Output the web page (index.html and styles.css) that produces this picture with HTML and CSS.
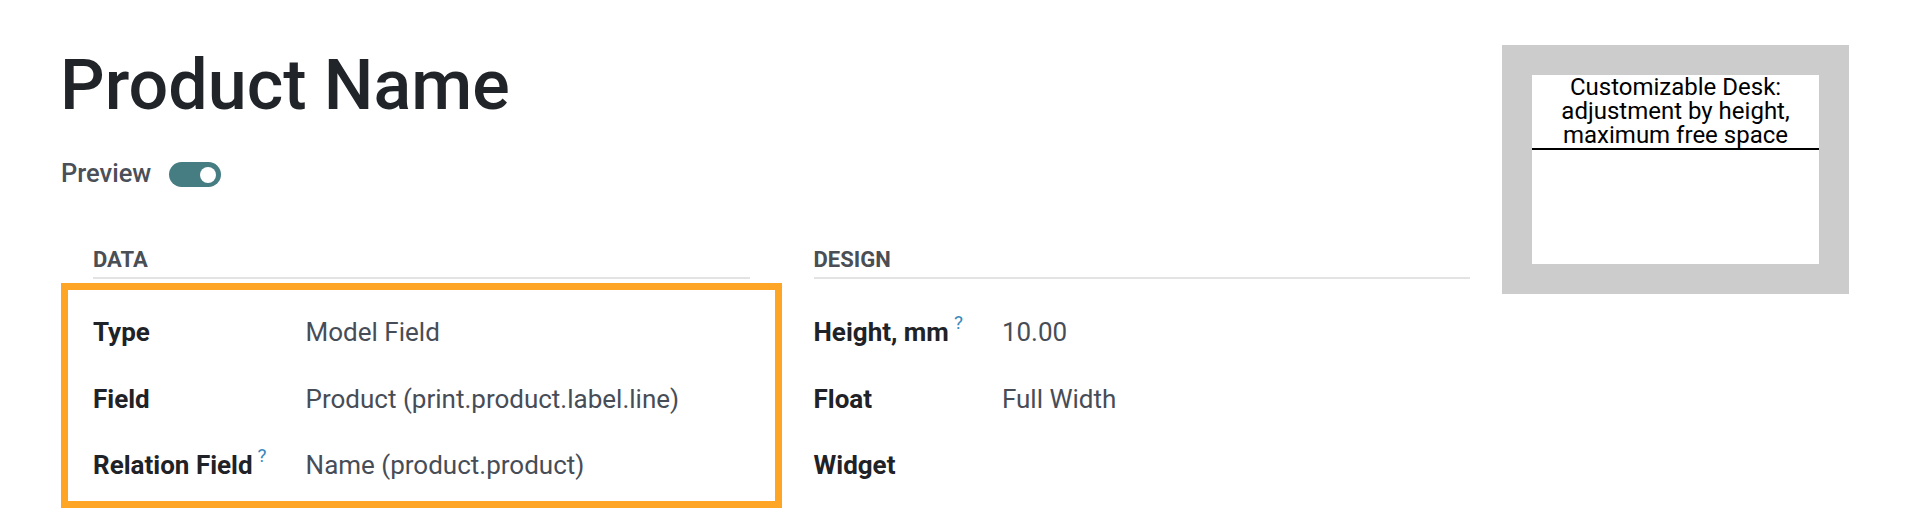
FILE: index.html
```html
<!DOCTYPE html>
<html lang="en">
<head>
<meta charset="utf-8">
<title>Product Name</title>
<link rel="stylesheet" href="styles.css">
</head>
<body>
<div class="sheet">
  <main class="main">
    <h1 class="title">Product Name</h1>
    <div class="preview-row">
      <span class="preview-label">Preview</span>
      <span class="toggle"><span class="knob"></span></span>
    </div>
    <div class="groups">
      <section class="group">
        <div class="group-head">DATA</div>
        <div class="rows highlight">
          <div class="lbl">Type</div><div class="val">Model Field</div>
          <div class="lbl">Field</div><div class="val">Product (print.product.label.line)</div>
          <div class="lbl">Relation Field<sup class="help">?</sup></div><div class="val">Name (product.product)</div>
        </div>
      </section>
      <section class="group">
        <div class="group-head">DESIGN</div>
        <div class="rows plain">
          <div class="lbl">Height, mm<sup class="help">?</sup></div><div class="val">10.00</div>
          <div class="lbl">Float</div><div class="val">Full Width</div>
          <div class="lbl">Widget</div><div class="val"></div>
        </div>
      </section>
    </div>
  </main>
  <aside class="label-preview">
    <div class="label-paper">
      <div class="label-text">
        <div class="label-line">Customizable Desk:</div>
        <div class="label-line">adjustment by height,</div>
        <div class="label-line">maximum free space</div>
      </div>
    </div>
  </aside>
</div>
</body>
</html>
```

FILE: styles.css
```css
html, body {
  margin: 0;
  padding: 0;
  background: #ffffff;
}

body {
  font-family: Roboto, "Noto Sans", "Liberation Sans", sans-serif;
  color: #212529;
}

.sheet {
  display: flex;
  align-items: flex-start;
  width: 1908px;
  height: 524px;
  overflow: hidden;
}

.main {
  flex: 1;
  padding: 43px 32px 0 60px;
  min-width: 0;
}

.title {
  margin: 0;
  font-size: 70px;
  line-height: 84px;
  font-weight: 500;
  color: #212529;
  letter-spacing: 0;
}

.preview-row {
  display: flex;
  align-items: flex-start;
  gap: 18px;
  margin-top: 33px;
  height: 26px;
}

.preview-label {
  font-size: 25.5px;
  line-height: 26px;
  font-weight: 500;
  color: #4a4f58;
  margin-left: 1px;
}

.toggle {
  display: flex;
  align-items: center;
  justify-content: flex-end;
  width: 52px;
  height: 25px;
  margin-top: 2px;
  padding: 0 5px;
  box-sizing: border-box;
  border-radius: 13px;
  background: #457d83;
}

.knob {
  width: 16px;
  height: 16px;
  border-radius: 50%;
  background: #ffffff;
}

.groups {
  display: grid;
  grid-template-columns: 1fr 1fr;
  column-gap: 64px;
  margin: 58px 0 0 33px;
}

.group-head {
  font-size: 22px;
  line-height: 31px;
  font-weight: 700;
  color: #4a4e55;
  padding-bottom: 2px;
  border-bottom: 2px solid #e3e3e3;
}

.rows {
  display: grid;
  grid-template-columns: max-content 1fr;
  column-gap: 37px;
  grid-auto-rows: 66.67px;
  align-items: center;
  font-size: 26px;
  line-height: 66.67px;
}

.highlight {
  margin: 4px -32px 0 -32px;
  border: 7px solid #ffa526;
  padding: 9px 25px 2px 25px;
}

.plain {
  margin-top: 20px;
}

.lbl {
  font-weight: 700;
  color: #1f2226;
  white-space: nowrap;
}

.val {
  font-weight: 400;
  color: #474d57;
  white-space: nowrap;
}

.help {
  font-size: 19px;
  font-weight: 400;
  color: #3a88bd;
  margin-left: 5px;
  margin-right: 2px;
  vertical-align: 0;
  position: relative;
  top: -12px;
  line-height: 0;
}

.label-preview {
  flex: none;
  width: 347px;
  box-sizing: border-box;
  margin: 45px 59px 0 0;
  padding: 30px;
  background: #cccccc;
}

.label-paper {
  height: 189px;
  background: #ffffff;
}

.label-text {
  text-align: center;
  color: #000000;
  padding-bottom: 1px;
  border-bottom: 2px solid #000000;
}

.label-line {
  height: 24px;
  font-size: 24px;
  line-height: 24px;
  white-space: nowrap;
}
```
